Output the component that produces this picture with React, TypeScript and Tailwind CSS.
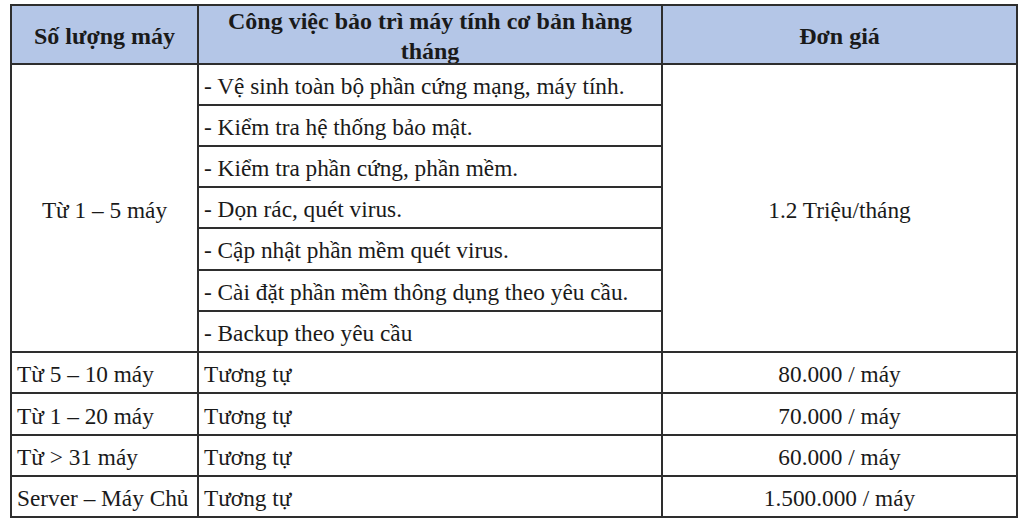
import React from "react";

const subRows = [
  { t: "- Vệ sinh toàn bộ phần cứng mạng, máy tính.", h: "h-[41px]" },
  { t: "- Kiểm tra hệ thống bảo mật.", h: "h-[41px]" },
  { t: "- Kiểm tra phần cứng, phần mềm.", h: "h-[41px]" },
  { t: "- Dọn rác, quét virus.", h: "h-[41px]" },
  { t: "- Cập nhật phần mềm quét virus.", h: "h-[42px]" },
  { t: "- Cài đặt phần mềm thông dụng theo yêu cầu.", h: "h-[41px]" },
  { t: "- Backup theo yêu cầu", h: "h-[41px]" },
];

const rows = [
  { a: "Từ 5 – 10 máy", b: "Tương tự", c: "80.000 / máy", h: "h-[41px]" },
  { a: "Từ 1 – 20 máy", b: "Tương tự", c: "70.000 / máy", h: "h-[42px]" },
  { a: "Từ > 31 máy", b: "Tương tự", c: "60.000 / máy", h: "h-[41px]" },
  { a: "Server – Máy Chủ", b: "Tương tự", c: "1.500.000 / máy", h: "h-[41px]" },
];

export default function App() {
  return (
    <div
      className="w-[1024px] h-[524px] bg-white overflow-hidden pl-[10px] pt-[4px] text-[#1a1a1a]"
      style={{ fontFamily: '"Liberation Serif", "Times New Roman", serif' }}
    >
      <div className="w-[1008px] border-l-2 border-t-2 border-[#2e2e2e] text-[23.3px] leading-[30px]">
        {/* header */}
        <div className="flex h-[59px] bg-[#b4c6e7] font-bold text-[24px]">
          <div className="w-[187px] border-r-2 border-b-2 border-[#2e2e2e] flex items-center justify-center pt-[3px] whitespace-nowrap">
            Số lượng máy
          </div>
          <div className="w-[464px] border-r-2 border-b-2 border-[#2e2e2e] overflow-hidden text-center px-[10px]">
            Công việc bảo trì máy tính cơ bản hàng tháng
          </div>
          <div className="w-[355px] border-r-2 border-b-2 border-[#2e2e2e] flex items-center justify-center pt-[3px]">
            Đơn giá
          </div>
        </div>
        {/* block */}
        <div className="flex h-[288px]">
          <div className="w-[187px] border-r-2 border-b-2 border-[#2e2e2e] flex items-center justify-center pt-[4px]">
            Từ 1 – 5 máy
          </div>
          <div className="w-[464px] flex flex-col">
            {subRows.map((r) => (
              <div
                key={r.t}
                className={`${r.h} border-r-2 border-b-2 border-[#2e2e2e] flex items-center pl-[5px] pt-[2px] whitespace-nowrap`}
              >
                {r.t}
              </div>
            ))}
          </div>
          <div className="w-[355px] border-r-2 border-b-2 border-[#2e2e2e] flex items-center justify-center pt-[4px]">
            1.2 Triệu/tháng
          </div>
        </div>
        {rows.map((r) => (
          <div key={r.a} className={`flex ${r.h}`}>
            <div className="w-[187px] border-r-2 border-b-2 border-[#2e2e2e] flex items-center pl-[5px] pt-[3px] whitespace-nowrap">
              {r.a}
            </div>
            <div className="w-[464px] border-r-2 border-b-2 border-[#2e2e2e] flex items-center pl-[5px] pt-[3px]">
              {r.b}
            </div>
            <div className="w-[355px] border-r-2 border-b-2 border-[#2e2e2e] flex items-center justify-center pt-[3px]">
              {r.c}
            </div>
          </div>
        ))}
      </div>
    </div>
  );
}
